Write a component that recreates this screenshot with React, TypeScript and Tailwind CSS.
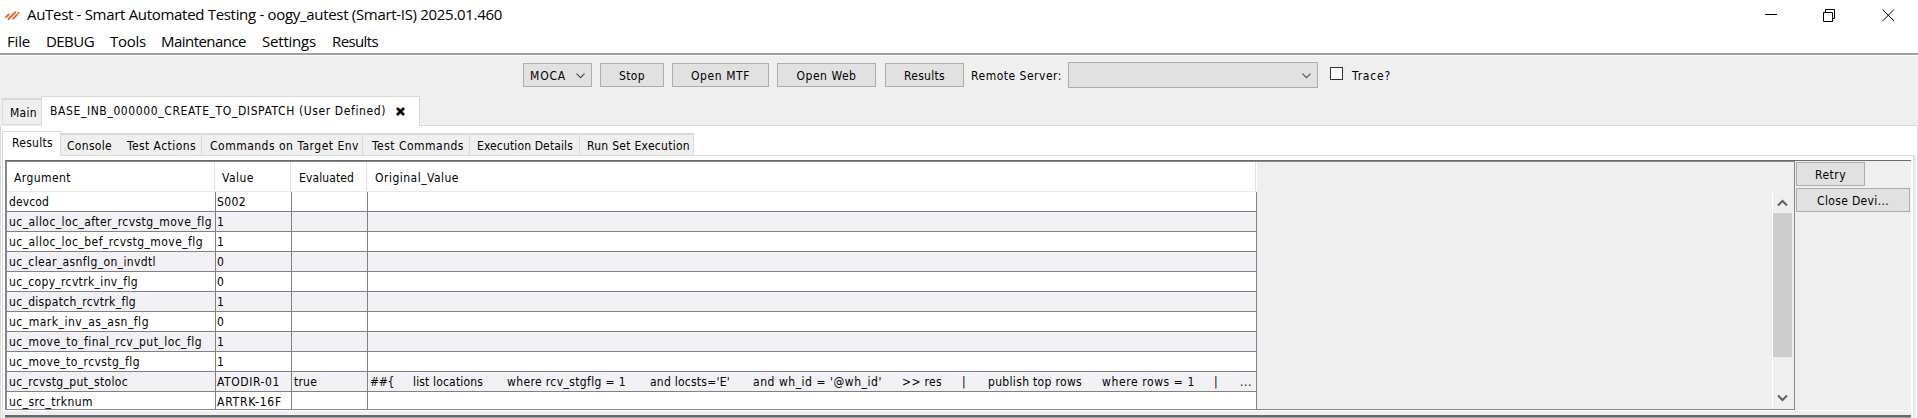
import { useLayoutEffect, useRef, type ReactNode } from "react";

/* Text run that is tracked so it spans the given width. */
function Fit({ w, children, className = "" }: { w: number; children: string; className?: string }) {
  const ref = useRef<HTMLSpanElement>(null);
  useLayoutEffect(() => {
    const el = ref.current;
    if (!el) return;
    el.style.letterSpacing = "0px";
    const natural = el.getBoundingClientRect().width;
    el.style.letterSpacing = `${(w - natural) / children.length}px`;
  }, [w, children]);
  return (
    <span className={`shrink-0 overflow-visible ${className}`} style={{ width: w }}>
      <span ref={ref} className="inline-block whitespace-pre">{children}</span>
    </span>
  );
}

function Button({ className, w, children }: { className: string; w: number; children: string }) {
  return (
    <button className={`flex h-6 items-center justify-center border border-[#adadad] bg-[#e1e1e1] pt-[2px] ${className}`}>
      <Fit w={w}>{children}</Fit>
    </button>
  );
}

function Chevron({ className = "" }: { className?: string }) {
  return (
    <svg className={className} width="9" height="6" viewBox="0 0 9 6" fill="none" stroke="#505050" strokeWidth="1.2">
      <path d="M0.5 0.7 4.5 4.7 8.5 0.7" />
    </svg>
  );
}

const menu = [
  { label: "File", w: 23, gap: "mr-4" },
  { label: "DEBUG", w: 48, gap: "mr-4" },
  { label: "Tools", w: 36, gap: "mr-[15px]" },
  { label: "Maintenance", w: 85, gap: "mr-4" },
  { label: "Settings", w: 54, gap: "mr-4" },
  { label: "Results", w: 46, gap: "" },
];

const tabs = [
  { label: "Console", w: 45, box: "w-[59px] pl-[6px]" },
  { label: "Test Actions", w: 69, box: "w-[82px] pl-[7px] border-r" },
  { label: "Commands on Target Env", w: 149, box: "w-[161px] pl-2 border-r" },
  { label: "Test Commands", w: 92, box: "w-[107px] pl-[9px] border-r" },
  { label: "Execution Details", w: 96, box: "w-[110px] pl-[7px] border-r" },
  { label: "Run Set Execution", w: 103, box: "w-[114px] pl-[7px] border-r" },
];

type Piece = [text: string, width: number, gap: string];

const rows: { name: string; w: number; value: string; vw: number; evaluated?: string; original?: Piece[] }[] = [
  { name: "devcod", w: 40, value: "S002", vw: 29 },
  { name: "uc_alloc_loc_after_rcvstg_move_flg", w: 203, value: "1", vw: 7 },
  { name: "uc_alloc_loc_bef_rcvstg_move_flg", w: 194, value: "1", vw: 7 },
  { name: "uc_clear_asnflg_on_invdtl", w: 147, value: "0", vw: 7 },
  { name: "uc_copy_rcvtrk_inv_flg", w: 129, value: "0", vw: 7 },
  { name: "uc_dispatch_rcvtrk_flg", w: 127, value: "1", vw: 7 },
  { name: "uc_mark_inv_as_asn_flg", w: 140, value: "0", vw: 7 },
  { name: "uc_move_to_final_rcv_put_loc_flg", w: 193, value: "1", vw: 7 },
  { name: "uc_move_to_rcvstg_flg", w: 131, value: "1", vw: 7 },
  {
    name: "uc_rcvstg_put_stoloc",
    w: 119,
    value: "ATODIR-01",
    vw: 63,
    evaluated: "true",
    original: [
      ["##{", 24, "mr-[19px]"],
      ["list locations", 70, "mr-[24px]"],
      ["where rcv_stgflg = 1", 119, "mr-[24px]"],
      ["and locsts='E'", 80, "mr-[23px]"],
      ["and wh_id = '@wh_id'", 129, "mr-[20px]"],
      [">> res", 40, "mr-[20px]"],
      ["|", 6, "mr-[20px]"],
      ["publish top rows", 94, "mr-[20px]"],
      ["where rows = 1", 93, "mr-[19px]"],
      ["|", 6, "mr-[20px]"],
      ["...", 12, ""],
    ],
  },
  { name: "uc_src_trknum", w: 84, value: "ARTRK-16F", vw: 65 },
];

function Cell({ className, children }: { className: string; children?: ReactNode }) {
  return <div className={`flex shrink-0 items-center border-r border-b border-[#808080] pt-px ${className}`}>{children}</div>;
}

export default function App() {
  return (
    <div className="flex h-[418px] w-[1918px] flex-col overflow-hidden bg-[#efefef] font-['DejaVu_Sans_Condensed','DejaVu_Sans',sans-serif] text-[12px] leading-4 text-black [font-stretch:condensed]">
      <div className="flex h-[30px] shrink-0 items-center bg-white pb-[2px] pl-[5px] font-['Open_Sans','Noto_Sans',sans-serif] text-[15px] [font-stretch:normal]">
        <svg className="mt-[2px]" width="15" height="9" viewBox="0 0 15 9" fill="none" stroke="#ee5a2a" strokeWidth="1.8" strokeLinecap="round">
          <path d="M.9 6.200 3.700 3.400M3.500 8 10.200 1.300M8.200 7.700 12 3.900M13.200 2.300 13.600 1.900" />
        </svg>
        <Fit w={475} className="ml-[7px]">AuTest - Smart Automated Testing - oogy_autest (Smart-IS) 2025.01.460</Fit>
        <svg className="mt-px mr-[23px] ml-auto" width="130" height="14" viewBox="0 0 130 14" fill="none" stroke="#000" strokeWidth="1">
          <path d="M0 6.500H12M58.500 4.500h9v9h-9zM60.500 4.500V1.500h9v9h-2M117.500 1.500l11.500 11.500M129 1.500l-11.500 11.500" />
        </svg>
      </div>
      <div className="flex h-[23px] shrink-0 items-center bg-white pb-px pl-[7px] font-['Open_Sans','Noto_Sans',sans-serif] text-[15px] [font-stretch:normal]">
        {menu.map((m) => (
          <Fit key={m.label} w={m.w} className={m.gap}>{m.label}</Fit>
        ))}
      </div>
      <div className="h-[3px] shrink-0 border-t-2 border-[#a0a0a0] bg-white" />
      <div className="flex h-[38px] shrink-0 items-center pl-[523px]">
        <div className="flex h-6 w-[69px] items-center justify-between border border-[#adadad] bg-[#e1e1e1] pr-1.5 pl-1.5">
          <Fit w={36} className="pt-[2px]">MOCA</Fit>
          <Chevron className="mt-px" />
        </div>
        <Button className="ml-2 w-16" w={26}>Stop</Button>
        <Button className="ml-2 w-[97px]" w={59}>Open MTF</Button>
        <Button className="ml-2 w-[99px]" w={60}>Open Web</Button>
        <Button className="ml-[9px] w-[79px]" w={41}>Results</Button>
        <Fit w={91} className="ml-[7px] pt-[2px]">Remote Server:</Fit>
        <div className="ml-[6px] flex h-[26px] w-[250px] items-center justify-end border border-[#adadad] bg-[#e1e1e1] pr-1.5">
          <Chevron className="mt-px" />
        </div>
        <div className="mb-[3px] ml-3 size-[13px] border border-[#333] bg-white" />
        <Fit w={39} className="ml-[9px] pt-[2px]">Trace?</Fit>
      </div>
      <div className="flex h-8 shrink-0 items-end pl-[2px]">
        <div className="mb-px flex h-[27px] w-[39px] items-center border-t-2 border-b border-l border-[#d9d9d9] pt-[2px] pl-[7px]">
          <Fit w={27}>Main</Fit>
        </div>
        <div className="flex h-[30px] w-[379px] items-center border-t border-r border-l border-[#d9d9d9] bg-white pb-px pl-2">
          <Fit w={336}>BASE_INB_000000_CREATE_TO_DISPATCH (User Defined)</Fit>
          <svg className="ml-[10px]" width="9" height="9" viewBox="0 0 9 9" stroke="#000" strokeWidth="2.7">
            <path d="M1 1 8 8M8 1 1 8" />
          </svg>
        </div>
        <div className="h-px grow bg-[#d9d9d9]" />
      </div>
      <div className="flex min-h-0 grow flex-col border-r border-l border-[#d9d9d9] bg-white pl-px">
        <div className="flex h-[30px] shrink-0 items-end">
          <div className="flex h-[25px] w-[59px] items-center border-t border-r border-l border-[#d9d9d9] pb-[2px] pl-[9px]">
            <Fit w={41}>Results</Fit>
          </div>
          {tabs.map((t) => (
            <div key={t.label} className={`flex h-[23px] items-center border-t-2 border-b border-[#d9d9d9] bg-[#efefef] pt-[2px] ${t.box}`}>
              <Fit w={t.w}>{t.label}</Fit>
            </div>
          ))}
          <div className="mr-[3px] h-px grow bg-[#d9d9d9]" />
        </div>
        <div className="mr-px flex min-h-0 grow border-r-2 border-[#efefef]">
          <div className="flex min-h-0 grow flex-col border-r border-l border-[#d9d9d9] pt-1 pr-[2px] pl-[2px]">
            <div className="flex h-[250px] shrink-0 border-t border-[#69696e]">
              <div className="flex w-[1790px] shrink-0 justify-between border border-l-2 border-[#828790] bg-[#efefef]">
                <div className="flex h-[247px] w-[1250px] flex-col overflow-hidden">
                  <div className="flex h-[30px] shrink-0 border-b border-[#e8e8e8] bg-white">
                    <div className="flex w-[208px] items-center border-r border-[#e0e0e0] pt-[2px] pl-[7px]"><Fit w={57}>Argument</Fit></div>
                    <div className="flex w-[76px] items-center border-r border-[#e0e0e0] pt-[2px] pl-[7px]"><Fit w={32}>Value</Fit></div>
                    <div className="flex w-[76px] items-center border-r border-[#e0e0e0] pt-[2px] pl-2"><Fit w={55}>Evaluated</Fit></div>
                    <div className="flex w-[889px] items-center border-r border-[#e0e0e0] pt-[2px] pl-2"><Fit w={84}>Original_Value</Fit></div>
                  </div>
                  {rows.map((r, i) => (
                    <div key={r.name} className={`flex h-5 shrink-0 ${i % 2 ? "bg-[#f0f0f5]" : "bg-white"}`}>
                      <Cell className="w-[209px] pl-[2px]"><Fit w={r.w}>{r.name}</Fit></Cell>
                      <Cell className="w-[76px] pl-px"><Fit w={r.vw}>{r.value}</Fit></Cell>
                      <Cell className="w-[76px] pl-[2px]">{r.evaluated && <Fit w={23}>{r.evaluated}</Fit>}</Cell>
                      <Cell className="w-[889px] pl-[2px]">
                        {r.original?.map(([text, w, gap], k) => <Fit key={k} w={w} className={gap}>{text}</Fit>)}
                      </Cell>
                    </div>
                  ))}
                </div>
                <div className="mt-[30px] mr-[2px] flex h-[216px] w-[20px] flex-col items-center border-l border-white">
                  <div className="flex h-[21px] items-center">
                    <svg width="11" height="8" viewBox="0 0 11 8" fill="none" stroke="#606060" strokeWidth="2"><path d="M1 6.500 5.500 2 10 6.500" /></svg>
                  </div>
                  <div className="h-36 w-full bg-[#cdcdcd]" />
                  <div className="mt-auto flex h-[21px] items-center">
                    <svg width="11" height="8" viewBox="0 0 11 8" fill="none" stroke="#606060" strokeWidth="2"><path d="M1 1.500 5.500 6 10 1.500" /></svg>
                  </div>
                </div>
              </div>
              <div className="flex grow flex-col gap-[2px] bg-[#efefef] pt-px pl-px">
                <Button className="w-[69px]" w={31}>Retry</Button>
                <Button className="w-[114px]" w={72}>Close Devi...</Button>
              </div>
            </div>
            <div className="h-[5px] shrink-0 border-t border-white bg-[#efefef]" />
            <div className="h-[3px] shrink-0 border-t-2 border-[#69696e] bg-[#a0a0a0]" />
          </div>
        </div>
      </div>
    </div>
  );
}
